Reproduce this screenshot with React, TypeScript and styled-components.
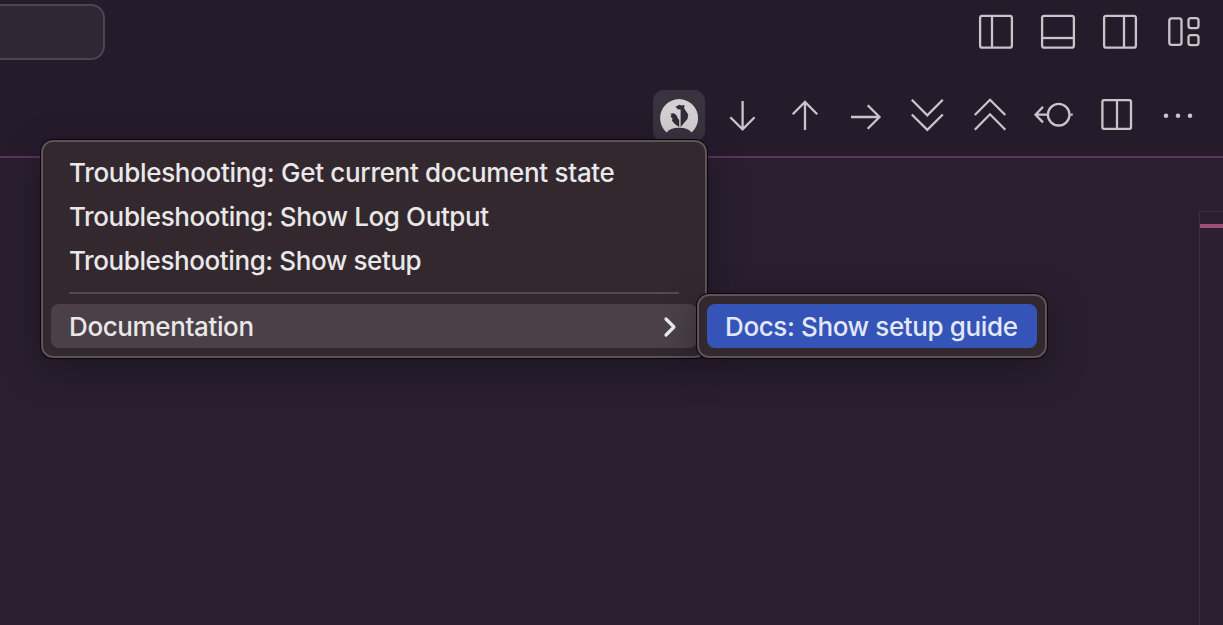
import React from "react";
import styled, { createGlobalStyle } from "styled-components";

const GlobalStyle = createGlobalStyle`
  * { box-sizing: border-box; }
  body { margin: 0; background: #2b1f2f; overflow: hidden; }
`;

const Window = styled.div`
  position: relative;
  display: flex;
  flex-direction: column;
  width: 100vw;
  height: 100vh;
  overflow: hidden;
  background: #2b1f2f;
  color: #ececec;
  font-family: Inter, "Liberation Sans", sans-serif;
`;

const TitleBar = styled.header`
  display: flex;
  justify-content: space-between;
  align-items: flex-start;
  height: 64px;
  flex: none;
  padding: 4px 24px 0 0;
  background: #261b2a;
`;

const CommandCenter = styled.div`
  width: 105px;
  height: 56px;
  border: 2px solid #4d4453;
  border-left: 0;
  border-radius: 0 14px 14px 0;
  background: #302735;
`;

const LayoutControls = styled.div`
  display: flex;
  gap: 28px;
  padding-top: 10px;
`;

const EditorBar = styled.div`
  display: flex;
  justify-content: flex-end;
  gap: 10px;
  flex: none;
  height: 94px;
  padding: 26px 22px 0 0;
  border-bottom: 2px solid #5d325e;
  background: #261b2a;
`;

const Button = styled.button<{ $active?: boolean; $size?: number }>`
  display: block;
  width: ${(p) => p.$size ?? 52}px;
  height: ${(p) => p.$size ?? 52}px;
  padding: 0;
  border: 0;
  border-radius: 11px;
  background: ${(p) => (p.$active ? "#3a323e" : "transparent")};
`;

const Glyph = styled.svg`
  display: block;
  width: 100%;
  height: 100%;
  overflow: visible;
  fill: none;
  stroke: #c8c5c8;
  stroke-width: 2.3;
`;

const Editor = styled.main`
  display: flex;
  justify-content: flex-end;
  flex: 1;
  padding-top: 53px;
`;

const OverviewRuler = styled.div`
  width: 24px;
  padding-top: 12px;
  border: solid #3a2f40;
  border-width: 1px 0 0 1px;
`;

const RulerMark = styled.div`
  height: 4px;
  background: #a04d79;
`;

const Menu = styled.div<{ $x: number; $y: number; $w: number }>`
  position: absolute;
  left: ${(p) => p.$x}px;
  top: ${(p) => p.$y}px;
  width: ${(p) => p.$w}px;
  padding: 8px;
  border: 2px solid #5c5257;
  border-radius: 12px;
  background: #34282f;
  box-shadow: 0 0 0 1px #09060a, 0 10px 36px rgba(8, 5, 20, 0.38);
`;

const MenuItem = styled.div<{ $tone?: "open" | "selected" }>`
  display: flex;
  align-items: center;
  justify-content: space-between;
  height: 44px;
  padding: 0 18px;
  border-radius: 8px;
  font-size: 26px;
  font-weight: 450;
  white-space: nowrap;
  color: ${(p) => (p.$tone === "selected" ? "#e4e8f6" : "#e9e8e9")};
  background: ${(p) =>
    p.$tone === "open" ? "#4b4047" : p.$tone === "selected" ? "#3454b8" : "transparent"};
`;

const Label = styled.span<{ $spacing: number }>`
  letter-spacing: ${(p) => p.$spacing}px;
`;

const Separator = styled.div`
  height: 2px;
  margin: 10px 18px;
  background: #554a50;
`;

const Chevron = styled.svg`
  width: 14px;
  height: 22px;
  margin: 1px 2px 0 0;
  fill: none;
  stroke: #ececec;
  stroke-width: 3.2;
  stroke-linecap: round;
  stroke-linejoin: round;
`;

const layoutIcons = [
  <><rect x="1.1" y="1.8" width="31.8" height="31.8" rx="2.2" /><path d="M13 2v32" /></>,
  <><rect x="1.1" y="1.8" width="31.8" height="31.8" rx="2.2" /><path d="M1 24h32" /></>,
  <><rect x="1.1" y="1.8" width="31.8" height="31.8" rx="2.2" /><path d="M21 2v32" /></>,
  <>
    <rect x="4.3" y="4.4" width="12.2" height="26.4" rx="2.4" />
    <rect x="23.5" y="4.2" width="10" height="10" rx="2.4" />
    <rect x="23.5" y="21.1" width="10" height="10" rx="2.4" />
  </>,
];

const actionIcons = [
  <g stroke="none">
    <path fill="#d2d0d2" d="M13.7 42.5A19 19 0 1 1 38.5 42.5Q35.5 37.7 26.1 37.7T13.7 42.5Z" />
    <path fill="#332b37" d="M22.4 16.7L26.6 14.7 28.5 15.4 31.4 14.9 31.2 18.2 32.2 20 35.3 24.8 34.4 28.9 27.6 36.9V19.6L24.6 19.2 23.8 18Z" />
    <path fill="#332b37" d="M17.4 23.8L20.6 23.2Q24 24.6 24.6 28L26.2 30V36.9Q21 34.2 18.8 30.6L19.6 28.4 17.4 26.4 18.6 25.6Z" />
  </g>,
  <path d="M27.6 11v28M15.3 27.3l12.3 12 12-12" />,
  <path d="M28 40V12M15.7 24.2L28 11.9l12.2 12.3" />,
  <path d="M12 27h28.5M28.7 15.2L40.5 27 28.7 38.8" />,
  <path d="M10.8 9.8l15.5 15.5L41.8 9.8M10.8 24.5l15.5 15.3 15.5-15.3" />,
  <path d="M11.8 25L27 9.8 42.3 25M11.8 39.7L27 24.3l15.3 15.4" />,
  <>
    <path d="M18 16.9L10.5 24.7l7.5 7.7M10 24.7h13.5M45.5 24.7h2.2" />
    <circle cx="33.7" cy="24.7" r="10.8" />
  </>,
  <><rect x="15.4" y="10.2" width="28.6" height="28.6" rx="1.6" /><path d="M30 10v29" /></>,
  <g fill="#c8c5c8" stroke="none">
    <circle cx="17" cy="25.7" r="2.3" />
    <circle cx="29" cy="25.7" r="2.3" />
    <circle cx="41" cy="25.7" r="2.3" />
  </g>,
];

export default function App() {
  return (
    <Window>
      <GlobalStyle />
      <TitleBar>
        <CommandCenter />
        <LayoutControls>
          {layoutIcons.map((icon, i) => (
            <Button key={i} $size={34}>
              <Glyph viewBox="0 0 34 34">{icon}</Glyph>
            </Button>
          ))}
        </LayoutControls>
      </TitleBar>
      <EditorBar>
        {actionIcons.map((icon, i) => (
          <Button key={i} $active={i === 0}>
            <Glyph viewBox="0 0 52 52">{icon}</Glyph>
          </Button>
        ))}
      </EditorBar>
      <Editor>
        <OverviewRuler>
          <RulerMark />
        </OverviewRuler>
      </Editor>
      <Menu $x={41} $y={140} $w={666}>
        <MenuItem><Label $spacing={-0.31}>Troubleshooting: Get current document state</Label></MenuItem>
        <MenuItem><Label $spacing={-0.38}>Troubleshooting: Show Log Output</Label></MenuItem>
        <MenuItem><Label $spacing={-0.41}>Troubleshooting: Show setup</Label></MenuItem>
        <Separator />
        <MenuItem $tone="open">
          <Label $spacing={-0.38}>Documentation</Label>
          <Chevron viewBox="0 0 14 22"><path d="M3 3l8 8-8 8" /></Chevron>
        </MenuItem>
      </Menu>
      <Menu $x={697} $y={294} $w={350}>
        <MenuItem $tone="selected"><Label $spacing={-0.38}>Docs: Show setup guide</Label></MenuItem>
      </Menu>
    </Window>
  );
}
